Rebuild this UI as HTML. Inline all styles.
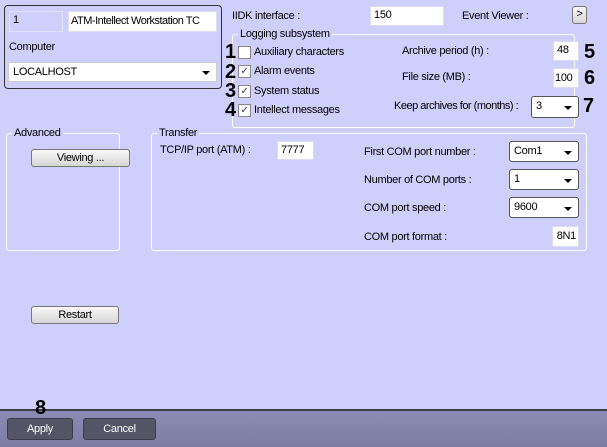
<!DOCTYPE html>
<html><head><style>
*{box-sizing:border-box;margin:0;padding:0}
body{width:607px;height:447px;background:#cfcffb;font-family:"Liberation Sans",sans-serif;font-size:11px;color:#000;position:relative;overflow:hidden;letter-spacing:-0.3px}
.a{position:absolute;white-space:nowrap;font-size:11px}
.in{position:absolute;background:#fff;border:1px solid #dcdcf0;padding:2px 3px;font-size:11px;white-space:nowrap;overflow:hidden}
.sel{position:absolute;background:#fff;border:1px solid #555;border-radius:3px;padding:3px 4px;font-size:11px}
.sel::after{content:"";position:absolute;right:6px;top:50%;margin-top:-1px;border-left:4px solid transparent;border-right:4px solid transparent;border-top:4px solid #000}
.grp{position:absolute;border:1px solid #fff;border-radius:3px}
.lg{position:absolute;background:#cfcffb;padding:0 2px;top:-7px;left:5px;white-space:nowrap}
.cb{position:absolute;width:13px;height:13px;background:#fff;border:1px solid #888;font-size:10px;line-height:11px;text-align:center;color:#335}
.n{position:absolute;font-weight:bold;font-size:20px;line-height:20px}
.btn{position:absolute;border:1px solid #777;border-radius:3px;background:linear-gradient(#f8f8f8,#d6d6d6);text-align:center;font-size:11px;line-height:16px}
.bb{position:absolute;background:#535466;border:1px solid #3c3c4c;border-radius:3px;color:#fff;text-align:center;font-size:11px;line-height:20px}
</style></head><body>
<div class="a" style="left:4px;top:5px;width:218px;height:84px;border:1px solid #333;border-radius:4px"></div>
<div class="in" style="left:9px;top:11px;width:54px;height:21px;border-color:#e0e0f8;background:#cfcffb">1</div>
<div class="in" style="left:68px;top:11px;width:149px;height:21px;padding:3px 2px;letter-spacing:-0.5px">ATM-Intellect Workstation TC</div>
<div class="a" style="left:9px;top:41px">Computer</div>
<div class="sel" style="left:8px;top:62px;width:209px;height:20px;border-color:#ccc;border-radius:0">LOCALHOST</div>

<div class="a" style="left:232px;top:10px">IIDK interface :</div>
<div class="in" style="left:370px;top:6px;width:74px;height:20px">150</div>
<div class="a" style="left:462px;top:10px">Event Viewer :</div>
<div class="btn" style="left:572px;top:6px;width:15px;height:18px;line-height:15px">&gt;</div>

<div class="grp" style="left:232px;top:34px;width:343px;height:94px"><span class="lg">Logging subsystem</span></div>
<div class="n" style="left:225px;top:42px">1</div><div class="cb" style="left:238px;top:46px"></div><div class="a" style="left:254px;top:46px">Auxiliary characters</div>
<div class="n" style="left:225px;top:62px">2</div><div class="cb" style="left:238px;top:65px">✓</div><div class="a" style="left:254px;top:65px">Alarm events</div>
<div class="n" style="left:225px;top:81px">3</div><div class="cb" style="left:238px;top:85px">✓</div><div class="a" style="left:254px;top:85px">System status</div>
<div class="n" style="left:225px;top:100px">4</div><div class="cb" style="left:238px;top:104px">✓</div><div class="a" style="left:254px;top:104px">Intellect messages</div>

<div class="a" style="left:402px;top:45px">Archive period (h) :</div>
<div class="in" style="left:553px;top:41px;width:26px;height:20px">48</div><div class="n" style="left:584px;top:42px">5</div>
<div class="a" style="left:402px;top:71px">File size (MB) :</div>
<div class="in" style="left:553px;top:68px;width:26px;height:20px;padding:3px 1px">100</div><div class="n" style="left:584px;top:68px">6</div>
<div class="a" style="left:394px;top:100px;letter-spacing:-0.5px">Keep archives for (months) :</div>
<div class="sel" style="left:531px;top:96px;width:48px;height:22px">3</div><div class="n" style="left:583px;top:96px">7</div>

<div class="grp" style="left:6px;top:133px;width:114px;height:118px"><span class="lg">Advanced</span></div>
<div class="btn" style="left:31px;top:149px;width:99px;height:18px">Viewing ...</div>

<div class="grp" style="left:151px;top:133px;width:436px;height:118px"><span class="lg">Transfer</span></div>
<div class="a" style="left:160px;top:144px">TCP/IP port (ATM) :</div>
<div class="in" style="left:277px;top:141px;width:37px;height:19px">7777</div>
<div class="a" style="left:364px;top:146px">First COM port number :</div>
<div class="sel" style="left:509px;top:141px;width:70px;height:21px">Com1</div>
<div class="a" style="left:364px;top:174px">Number of COM ports :</div>
<div class="sel" style="left:509px;top:169px;width:70px;height:21px">1</div>
<div class="a" style="left:364px;top:202px">COM port speed :</div>
<div class="sel" style="left:509px;top:197px;width:70px;height:21px">9600</div>
<div class="a" style="left:364px;top:231px">COM port format :</div>
<div class="in" style="left:552px;top:226px;width:27px;height:21px;text-align:right;padding:3px 2px">8N1</div>

<div class="btn" style="left:31px;top:306px;width:88px;height:18px">Restart</div>

<div class="a" style="left:0;top:409px;width:607px;height:38px;background:linear-gradient(#8b8bb4,#7c7ca4);border-top:2px solid #3a3a4a"></div>
<div class="n" style="left:35px;top:398px">8</div>
<div class="bb" style="left:7px;top:418px;width:66px;height:22px">Apply</div>
<div class="bb" style="left:83px;top:418px;width:73px;height:22px">Cancel</div>
</body></html>
